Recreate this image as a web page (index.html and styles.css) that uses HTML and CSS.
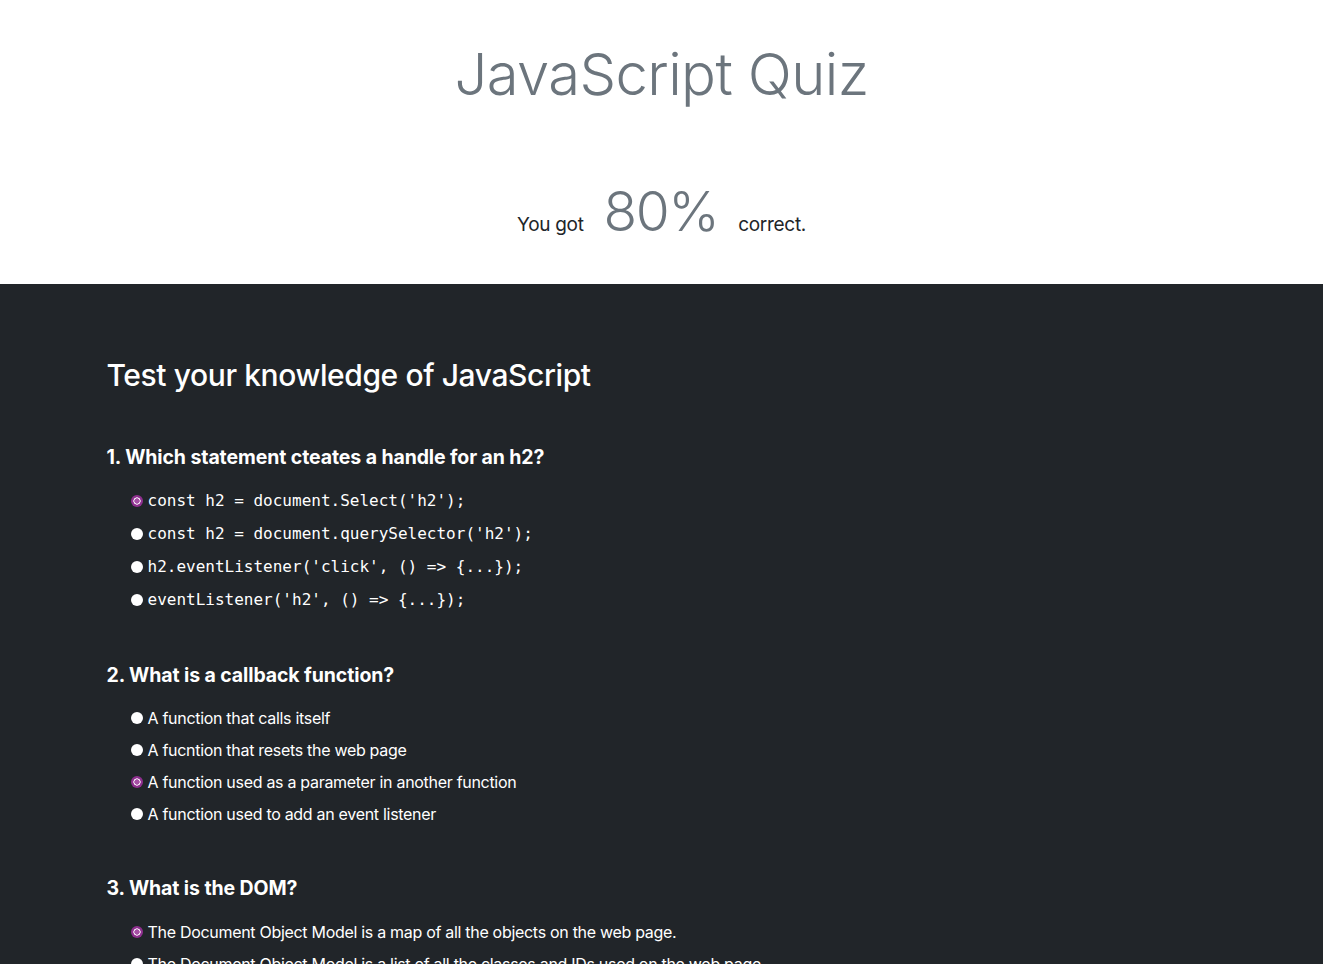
FILE: index.html
```html
<!DOCTYPE html>
<html lang="en">
<head>
<meta charset="utf-8">
<title>JavaScript Quiz</title>
<link rel="stylesheet" href="styles.css">
</head>
<body>
<header class="hero">
  <h1 class="hero-title">JavaScript Quiz</h1>
  <p class="score">
    <span class="score-text">You got</span>
    <span class="score-value">80%</span>
    <span class="score-text">correct.</span>
  </p>
</header>
<main class="quiz">
  <div class="container">
    <h2 class="quiz-title">Test your knowledge of JavaScript</h2>
    <form class="quiz-form">
      <div class="question">
        <h3 class="question-title">1. Which statement cteates a handle for an h2?</h3>
        <label class="option option-code"><input type="radio" name="q1" value="A" checked><code>const h2 = document.Select('h2');</code></label>
        <label class="option option-code"><input type="radio" name="q1" value="B"><code>const h2 = document.querySelector('h2');</code></label>
        <label class="option option-code"><input type="radio" name="q1" value="C"><code>h2.eventListener('click', () =&gt; {...});</code></label>
        <label class="option option-code"><input type="radio" name="q1" value="D"><code>eventListener('h2', () =&gt; {...});</code></label>
      </div>
      <div class="question">
        <h3 class="question-title">2. What is a callback function?</h3>
        <label class="option"><input type="radio" name="q2" value="A">A function that calls itself</label>
        <label class="option"><input type="radio" name="q2" value="B">A fucntion that resets the web page</label>
        <label class="option"><input type="radio" name="q2" value="C" checked>A function used as a parameter in another function</label>
        <label class="option"><input type="radio" name="q2" value="D">A function used to add an event listener</label>
      </div>
      <div class="question">
        <h3 class="question-title">3. What is the DOM?</h3>
        <label class="option"><input type="radio" name="q3" value="A" checked>The Document Object Model is a map of all the objects on the web page.</label>
        <label class="option"><input type="radio" name="q3" value="B">The Document Object Model is a list of all the classes and IDs used on the web page.</label>
        <label class="option"><input type="radio" name="q3" value="C">The Document Object Model is a JavaScript library for building pages.</label>
        <label class="option"><input type="radio" name="q3" value="D">The Document Object Model is a type of database.</label>
      </div>
    </form>
  </div>
</main>
</body>
</html>
```
FILE: styles.css
```css
* { box-sizing: border-box; }
html, body { margin: 0; padding: 0; }
body {
  font-family: Inter, "Noto Sans", "Liberation Sans", sans-serif;
  font-size: 16px;
  line-height: 1.5;
  color: #212529;
  background: #212529;
}
.hero {
  background: #fff;
  height: 284px;
  padding-top: 38px;
  text-align: center;
}
.hero-title {
  margin: 0;
  font-size: 58px;
  line-height: 72px;
  font-weight: 300;
  color: #6c757d;
  letter-spacing: -0.6px;
}
.score {
  margin: 68px 0 0;
  display: flex;
  justify-content: center;
  align-items: baseline;
  gap: 20px;
}
.score-text {
  font-size: 19px;
  color: #212529;
  letter-spacing: -0.3px;
}
.score-value {
  font-size: 55px;
  line-height: 67px;
  font-weight: 300;
  color: #6c757d;
  letter-spacing: -1.5px;
}
.quiz {
  background: #212529;
  color: #fff;
  padding: 73px 0 80px;
  min-height: 680px;
}
.container {
  width: 1140px;
  margin: 0 auto;
  padding: 0 15px;
}
.quiz-title {
  margin: 0 0 51px;
  font-size: 30px;
  line-height: 37px;
  font-weight: 500;
  letter-spacing: -0.4px;
}
.question { margin-bottom: 46px; }
.question-title {
  margin: 0 0 15.5px;
  font-size: 19.5px;
  line-height: 24px;
  font-weight: 700;
  letter-spacing: -0.1px;
}
.option {
  display: flex;
  align-items: center;
  height: 32px;
  padding-left: 24px;
  font-size: 16px;
  letter-spacing: -0.3px;
}
.option-code { height: 33px; }
.option code {
  font-family: "DejaVu Sans Mono", "Liberation Mono", monospace;
  font-size: 16px;
  letter-spacing: 0;
}
.option input {
  appearance: none;
  -webkit-appearance: none;
  width: 12px;
  height: 12px;
  margin: 0 5px 0 0;
  border-radius: 50%;
  background: #fff;
  flex: none;
}
.option input:checked {
  background: radial-gradient(circle, #a54fa5 0 2.4px, #f3e6f3 2.9px 3.4px, #8e2f8e 3.9px);
}
```
